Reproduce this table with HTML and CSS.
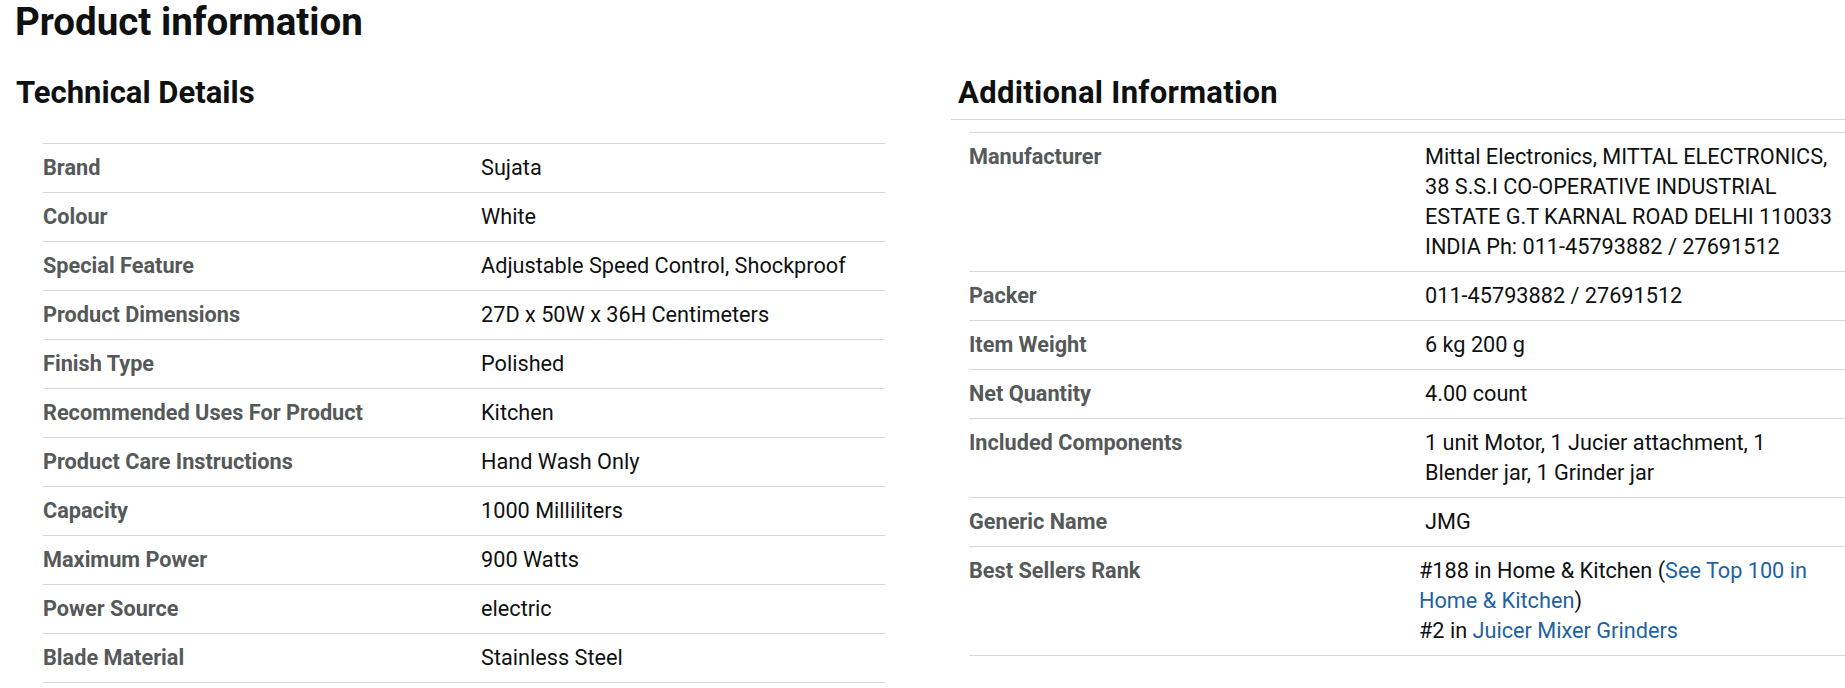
FILE: index.html
```html
<!DOCTYPE html>
<html lang="en">
<head>
<meta charset="utf-8">
<title>Product information</title>
<link rel="stylesheet" href="styles.css">
</head>
<body>
<div class="page">
  <h1 class="title">Product information</h1>
  <div class="columns">
    <section class="col col-left">
      <h2 class="section-title">Technical Details</h2>
      <div class="spec-table spec-left">
        <div class="row"><div class="label">Brand</div><div class="value">Sujata</div></div>
        <div class="row"><div class="label">Colour</div><div class="value">White</div></div>
        <div class="row"><div class="label">Special Feature</div><div class="value">Adjustable Speed Control, Shockproof</div></div>
        <div class="row"><div class="label">Product Dimensions</div><div class="value">27D x 50W x 36H Centimeters</div></div>
        <div class="row"><div class="label">Finish Type</div><div class="value">Polished</div></div>
        <div class="row"><div class="label">Recommended Uses For Product</div><div class="value">Kitchen</div></div>
        <div class="row"><div class="label">Product Care Instructions</div><div class="value">Hand Wash Only</div></div>
        <div class="row"><div class="label">Capacity</div><div class="value">1000 Milliliters</div></div>
        <div class="row"><div class="label">Maximum Power</div><div class="value">900 Watts</div></div>
        <div class="row"><div class="label">Power Source</div><div class="value">electric</div></div>
        <div class="row"><div class="label">Blade Material</div><div class="value">Stainless Steel</div></div>
      </div>
    </section>
    <section class="col col-right">
      <h2 class="section-title section-title-ruled">Additional Information</h2>
      <div class="spec-table spec-right">
        <div class="row"><div class="label">Manufacturer</div><div class="value indent">Mittal Electronics, MITTAL ELECTRONICS,<br>38 S.S.I CO-OPERATIVE INDUSTRIAL<br>ESTATE G.T KARNAL ROAD DELHI 110033<br>INDIA Ph: 011-45793882 / 27691512</div></div>
        <div class="row"><div class="label">Packer</div><div class="value indent">011-45793882 / 27691512</div></div>
        <div class="row"><div class="label">Item Weight</div><div class="value indent">6 kg 200 g</div></div>
        <div class="row"><div class="label">Net Quantity</div><div class="value indent">4.00 count</div></div>
        <div class="row"><div class="label">Included Components</div><div class="value indent">1 unit Motor, 1 Jucier attachment, 1<br>Blender jar, 1 Grinder jar</div></div>
        <div class="row"><div class="label">Generic Name</div><div class="value indent">JMG</div></div>
        <div class="row"><div class="label">Best Sellers Rank</div>
          <div class="value">
            <ul class="rank-list">
              <li>#188 in Home &amp; Kitchen (<a href="#">See Top 100 in<br>Home &amp; Kitchen</a>)</li>
              <li>#2 in <a href="#">Juicer Mixer Grinders</a></li>
            </ul>
          </div>
        </div>
      </div>
    </section>
  </div>
</div>
</body>
</html>
```
FILE: styles.css
```css
html, body {
  margin: 0;
  padding: 0;
  background: #ffffff;
}

body {
  font-family: Roboto, "Liberation Sans", Arial, sans-serif;
  color: #0f1111;
}

.page {
  padding-left: 15px;
}

.title {
  margin: 0;
  font-size: 38.5px;
  line-height: 44px;
  font-weight: 700;
  color: #0f1111;
}

.columns {
  display: grid;
  grid-template-columns: 870px 1fr;
  column-gap: 66px;
  margin-top: 31px;
  align-items: start;
}

.section-title {
  margin: 0;
  font-size: 31px;
  line-height: 36px;
  font-weight: 700;
  color: #0f1111;
  padding-left: 1px;
}

.section-title-ruled {
  padding-left: 7px;
  padding-bottom: 8px;
  border-bottom: 1px solid #d5d9d9;
  letter-spacing: 0.3px;
}

.spec-table {
  display: flex;
  flex-direction: column;
  border-bottom: 1px solid #d5d9d9;
  font-size: 21.7px;
  line-height: 30px;
}

.spec-left {
  margin-left: 28px;
  margin-top: 32px;
}

.spec-right {
  margin-left: 18px;
  margin-top: 12px;
}

.row {
  display: grid;
  border-top: 1px solid #d5d9d9;
  padding: 9px 0;
}

.spec-left .row {
  grid-template-columns: 438px 1fr;
}

.spec-right .row {
  grid-template-columns: 450px 1fr;
}

.label {
  font-weight: 700;
  color: #565959;
  white-space: nowrap;
}

.value {
  color: #0f1111;
  white-space: nowrap;
}

.indent {
  padding-left: 6px;
}

.rank-list {
  list-style: none;
  margin: 0;
  padding: 0;
}

.rank-list a {
  color: #2162a1;
  text-decoration: none;
}
```
